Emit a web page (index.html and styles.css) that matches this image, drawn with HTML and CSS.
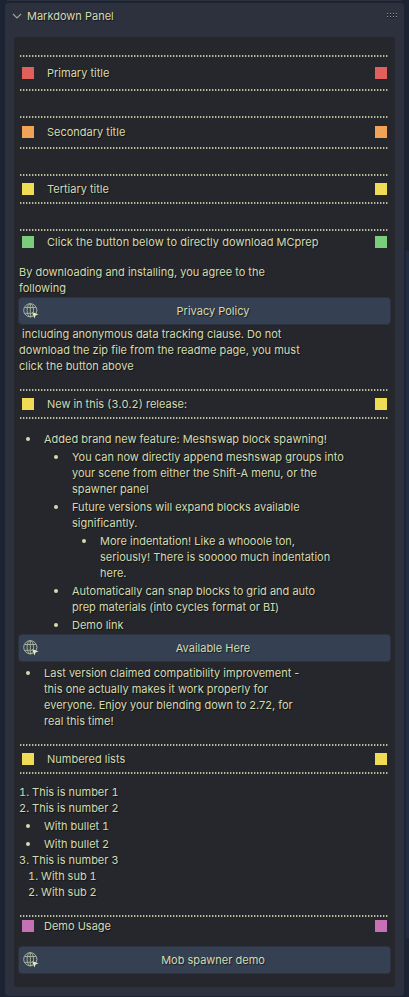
FILE: index.html
```html
<!DOCTYPE html>
<html lang="en">
<head>
<meta charset="utf-8">
<title>Markdown Panel</title>
<link rel="stylesheet" href="styles.css">
</head>
<body>
<svg class="defs" width="0" height="0">
  <symbol id="globe" viewBox="0 0 16 16">
    <g fill="none" stroke="#a6b09a" stroke-width="1">
      <circle cx="7.3" cy="7.3" r="6.6"/>
      <ellipse cx="7.3" cy="7.3" rx="3.2" ry="6.6"/>
      <path d="M7.3 .7v13.200M1.700 4.500h11.200M1.700 10.300h11.200"/>
    </g>
    <path d="M9 9l6.500 2.300-2.900 1.200-1.200 3z" fill="#e0e8bc" stroke="#354052" stroke-width="1" paint-order="stroke"/>
  </symbol>
</svg>
<div class="previous"></div>
<div class="scrollbar"></div>
<main class="panel">
  <header class="panel-header">
    <svg class="chevron" viewBox="0 0 10 6" width="10" height="6"><path d="M1 1l4 4 4-4" fill="none" stroke="#a0a795" stroke-width="1.1"/></svg>
    <span>Markdown Panel</span>
    <svg class="grip" width="11" height="5" viewBox="0 0 11 5" shape-rendering="crispEdges">
      <path d="M0 .5h1m2 0h1m2 0h1m2 0h1M0 3.500h1m2 0h1m2 0h1m2 0h1" stroke="#9a9da3"/>
      <path d="M0 1.500h1m2 0h1m2 0h1m2 0h1M0 4.500h1m2 0h1m2 0h1m2 0h1" stroke="#0c0e14"/>
    </svg>
  </header>
  <section class="box">
    <h1 class="title red">Primary title</h1>
    <h2 class="title orange">Secondary title</h2>
    <h3 class="title yellow">Tertiary title</h3>
    <h4 class="title green">Click the button below to directly download MCprep</h4>
    <p class="intro">By downloading and installing, you agree to the<br>following</p>
    <button class="link"><svg><use href="#globe"/></svg>Privacy Policy</button>
    <p>&nbsp;including anonymous data tracking clause. Do not<br>download the zip file from the readme page, you must<br>click the button above</p>
    <h3 class="title yellow release">New in this (3.0.2) release:</h3>
    <ul class="features">
      <li>Added brand new feature: Meshswap block spawning!
        <ul>
          <li>You can now directly append meshswap groups into<br>your scene from either the Shift-A menu, or the<br>spawner panel</li>
          <li>Future versions will expand blocks available<br>significantly.
            <ul>
              <li>More indentation! Like a whooole ton,<br>seriously! There is sooooo much indentation<br>here.</li>
            </ul>
          </li>
          <li>Automatically can snap blocks to grid and auto<br>prep materials (into cycles format or B<span class="serif-i">I</span>)</li>
          <li>Demo link</li>
        </ul>
      </li>
    </ul>
    <button class="link"><svg><use href="#globe"/></svg>Available Here</button>
    <ul class="compat">
      <li>Last version claimed compatibility improvement -<br>this one actually makes it work properly for<br>everyone. Enjoy your blending down to 2.72, for<br>real this time!</li>
    </ul>
    <h3 class="title yellow numbered">Numbered lists</h3>
    <div class="numbers">
      <p>1. This is number 1</p>
      <p>2. This is number 2</p>
      <ul>
        <li>With bullet 1</li>
        <li>With bullet 2</li>
      </ul>
      <p>3. This is number 3</p>
      <p class="sub">1. With sub 1</p>
      <p class="sub">2. With sub 2</p>
    </div>
    <h5 class="title pink">Demo Usage</h5>
    <button class="link demo"><svg><use href="#globe"/></svg>Mob spawner demo</button>
  </section>
</main>
</body>
</html>
```
FILE: styles.css
```css
* { box-sizing: border-box; margin: 0; padding: 0; }
body {
  width: 409px;
  height: 997px;
  overflow: hidden;
  background: #1c2333;
  color: #d2dbb0;
  font: 11px/16px Inter, sans-serif;
  text-shadow: 1px 1px 1px rgba(0, 0, 0, .55);
}
.defs { position: absolute; }
.previous { height: 1px; margin: 0 7px 2px 7px; background: #2d303d; }
.scrollbar {
  position: absolute;
  top: 251px;
  right: 0;
  width: 3px;
  height: 687px;
  background: #232c40;
}
.panel {
  width: 399px;
  height: 993px;
  margin-left: 5px;
  padding: 0 9px;
  border-radius: 4px;
  background: #2d303d;
}
.panel-header {
  display: flex;
  align-items: center;
  height: 34px;
  padding-bottom: 8px;
}
.chevron { margin: 0 5px 1px -2px; }
.grip { margin: 0 -3px 2px auto; }
.box {
  height: 950px;
  padding: 18px 4px 0;
  border-radius: 3px;
  background: #26272c;
}
.title {
  --dots: repeating-linear-gradient(90deg, #b6be9b 0 1px, #5f6356 1px 2px, transparent 2px 3px);
  display: flex;
  align-items: center;
  height: 30px;
  margin: 0 3px 25px 2px;
  padding: 0 1px 0 2px;
  background: var(--dots) top / 100% 2px no-repeat, var(--dots) bottom / 100% 2px no-repeat;
  font-size: inherit;
  font-weight: 400;
}
.title::before, .title::after {
  content: "";
  width: 12px;
  height: 12px;
  background: var(--swatch);
}
.title::before { margin-right: 13px; }
.title::after { margin-left: auto; }
.red { --swatch: #e2605b; height: 36px; }
.orange { --swatch: #f1a355; height: 33px; padding-bottom: 1px; }
.yellow { --swatch: #efdc54; }
.green { --swatch: #7acd7b; }
.pink { --swatch: #c671b6; }
.green, .pink {
  height: 22px;
  margin-bottom: 0;
  background: var(--dots) top / 100% 2px no-repeat;
}
.green { padding-top: 4px; letter-spacing: .04px; }
.pink { margin-top: 15px; }
.pink::before { margin-right: 10px; }
.intro { margin-top: 13px; }
p { padding-left: 1px; white-space: nowrap; }
.link {
  display: flex;
  align-items: center;
  justify-content: center;
  width: 373px;
  height: 28px;
  margin: 1px 0;
  padding-left: 17px;
  border: 1px solid #2c3340;
  border-radius: 4px;
  background: #354052;
  color: inherit;
  font: inherit;
  text-shadow: inherit;
  position: relative;
}
.link svg { position: absolute; left: 4px; top: 5px; width: 16px; height: 16px; }
.demo { margin-top: 9px; }
.release { margin: 15px 3px 12px 2px; }
.numbered { margin: 15px 3px 10px 2px; }
.release, .numbers { font-feature-settings: "tnum"; }
.serif-i { font-feature-settings: "ss02"; }
ul { list-style: none; padding-left: 26px; }
li { margin-top: 2px; white-space: nowrap; }
li::before {
  content: "";
  float: left;
  width: 4px;
  height: 4px;
  margin: 6px 0 0 -18px;
  border-radius: 50%;
  background: #d2dbb0;
}
li ul { padding-left: 28px; }
.features > li, .compat > li { margin-top: 0; }
.features { margin-bottom: 1px; }
.compat { padding-top: 2px; }
.sub { padding-left: 10px; }
```
